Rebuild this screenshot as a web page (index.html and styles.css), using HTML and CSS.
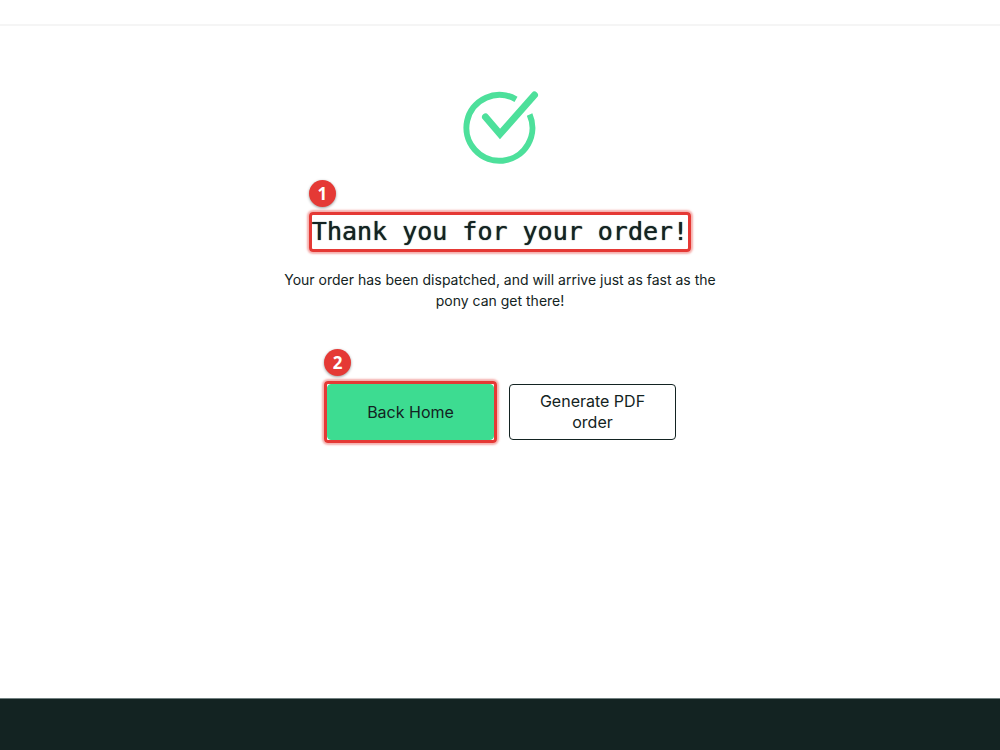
FILE: index.html
```html
<!DOCTYPE html>
<html lang="en">
<head>
<meta charset="utf-8">
<meta name="viewport" content="width=device-width, initial-scale=1">
<title>Thank you for your order!</title>
<link rel="stylesheet" href="styles.css">
</head>
<body>
<header class="topbar"></header>
<main class="content">
  <svg class="check" viewBox="0 0 80 76" fill="none" stroke="#4de09b" aria-hidden="true">
    <path d="M56 11.300A33 33 0 1 0 69.600 26.500" stroke-width="6"/>
    <path d="M25.500 29L40 46L74.500 7" stroke-width="7" stroke-linecap="round"/>
  </svg>
  <div class="callout callout-title">
    <h1 class="title">Thank you for your order!</h1>
    <span class="badge">1</span>
  </div>
  <p class="message">Your order has been dispatched, and will arrive just as fast as the pony can get there!</p>
  <div class="actions">
    <div class="callout callout-button">
      <button class="button primary" type="button">Back Home</button>
      <span class="badge">2</span>
    </div>
    <button class="button secondary" type="button">Generate PDF order</button>
  </div>
</main>
<footer class="footer"></footer>
</body>
</html>
```
FILE: styles.css
```css
* {
  box-sizing: border-box;
}

body {
  display: flex;
  flex-direction: column;
  min-height: 100vh;
  margin: 0;
  background: #fff;
  color: #132322;
  font-family: "Inter", "Liberation Sans", sans-serif;
}

.topbar {
  height: 26px;
  border-bottom: 2px solid #f5f5f5;
}

.content {
  display: flex;
  flex: 1;
  flex-direction: column;
  align-items: center;
  padding: 62px 16px 32px;
}

.check {
  width: 80px;
  height: 76px;
}

.callout {
  position: relative;
  border: 3px solid #e53935;
  border-radius: 4px;
  box-shadow: 0 0 2px 2px rgba(229, 57, 53, 0.4);
}

.callout-title {
  margin-top: 48px;
}

.title {
  margin: 0;
  font-family: "DejaVu Sans Mono", monospace;
  font-size: 25px;
  font-weight: 400;
  line-height: 34px;
  text-shadow: 0 0 1px #132322;
}

.badge {
  position: absolute;
  bottom: 100%;
  left: -3px;
  width: 27px;
  margin-bottom: 8px;
  border-radius: 50%;
  background: #e53935;
  box-shadow: 0 1px 3px rgba(0, 0, 0, 0.4);
  color: #fff;
  font-family: "Noto Sans", sans-serif;
  font-size: 17px;
  font-weight: 700;
  line-height: 27px;
  text-align: center;
}

.message {
  max-width: 448px;
  margin: 17px 0 0;
  font-size: 14px;
  line-height: 21px;
  text-align: center;
}

.actions {
  display: flex;
  align-items: center;
  gap: 12px;
  margin-top: 70px;
}

.button {
  width: 167px;
  height: 56px;
  padding: 0 24px;
  border: 1px solid #132322;
  border-radius: 4px;
  background: #fff;
  color: #132322;
  font-family: inherit;
  font-size: 16px;
  line-height: 21px;
}

.primary {
  display: block;
  border-color: #3ddc91;
  background: #3ddc91;
}

.footer {
  height: 52px;
  border-top: 1px solid #718080;
  background: #132322;
}
```
